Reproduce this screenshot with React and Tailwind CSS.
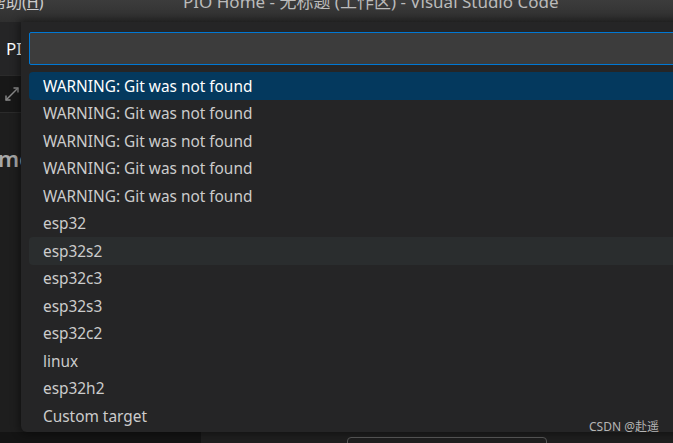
import React from "react";

const items = [
  "WARNING: Git was not found",
  "WARNING: Git was not found",
  "WARNING: Git was not found",
  "WARNING: Git was not found",
  "WARNING: Git was not found",
  "esp32",
  "esp32s2",
  "esp32c3",
  "esp32s3",
  "esp32c2",
  "linux",
  "esp32h2",
  "Custom target",
];

const font = { fontFamily: '"Segoe UI", "Noto Sans", "Noto Sans CJK SC", sans-serif' };

export default function App() {
  return (
    <div
      className="relative w-[673px] h-[443px] overflow-hidden bg-[#1e1e1e] text-[#cccccc]"
      style={font}
    >
      {/* title bar */}
      <div className="relative h-[22px] bg-gradient-to-b from-[#3c3c3c] to-[#2f2f2f] overflow-hidden">
        <div className="absolute left-[-10px] top-[-9px] text-[16px] leading-[22px] text-[#cccccc] whitespace-nowrap">
          帮助(<span className="underline">H</span>)
        </div>
        <div className="absolute left-[183px] top-[-9px] text-[17px] leading-[22px] text-[#bbbbbb] whitespace-nowrap">
          PIO Home - 无标题 (工作区) - Visual Studio Code
        </div>
      </div>

      {/* editor background */}
      <div className="flex h-[421px]">
        <div className="w-[201px] flex flex-col">
          <div className="h-[53px] bg-[#252526] flex items-center pl-[6px]">
            <span className="text-[17px] text-white">PIO Home</span>
          </div>
          <div className="h-[38px] bg-[#181818] border-t border-[#2b2b2b] border-b flex items-center pl-[4px]">
            <svg width="16" height="16" viewBox="0 0 16 16" fill="none" stroke="#8a8a8a" strokeWidth="1.4">
              <path d="M2 14 L14 2" />
              <path d="M2 9.5 V14 H6.5" />
              <path d="M9.5 2 H14 V6.5" />
            </svg>
          </div>
          <div className="flex-1 bg-[#1e1e1e] pt-[34px]">
            <div className="text-[22px] font-semibold text-[#a8a8a8] ml-[-2px] whitespace-nowrap leading-none">me</div>
          </div>
          <div className="h-[11px] bg-[#141414]" />
        </div>
        <div className="flex-1 flex flex-col">
          <div className="flex-1 bg-[#1e1e1e]" />
          <div className="h-[11px] bg-[#1f1f1f] pl-[146px] pt-[5px]">
            <div className="w-[200px] h-[10px] border border-[#5a5a5a] rounded-[4px]" />
          </div>
        </div>
      </div>

      {/* quick pick */}
      <div className="absolute left-[21px] top-[22px] w-[700px] h-[410px] bg-[#252526] rounded-bl-[6px] shadow-[0_0_8px_2px_rgba(0,0,0,0.45)] pl-[8px] pt-[10px]">
        <div className="h-[33px] bg-[#3c3c3c] border border-[#0078d4] rounded-[2px]" />
        <div className="mt-[7px] flex flex-col">
          {items.map((t, i) => (
            <div
              key={i}
              className={`h-[27.5px] flex items-center pl-[14px] pt-[1px] text-[15.4px] rounded-l-[4px] whitespace-nowrap ${
                i === 0
                  ? "bg-[#04395e] text-white"
                  : i === 6
                  ? "bg-[#2a2d2e] text-[#cccccc]"
                  : "text-[#cccccc]"
              }`}
            >
              {t}
            </div>
          ))}
        </div>
      </div>

      {/* watermark */}
      <div className="absolute left-[589px] top-[418px] text-[12px] text-[#b5b5b5] whitespace-nowrap">
        CSDN @赴遥
      </div>
    </div>
  );
}
